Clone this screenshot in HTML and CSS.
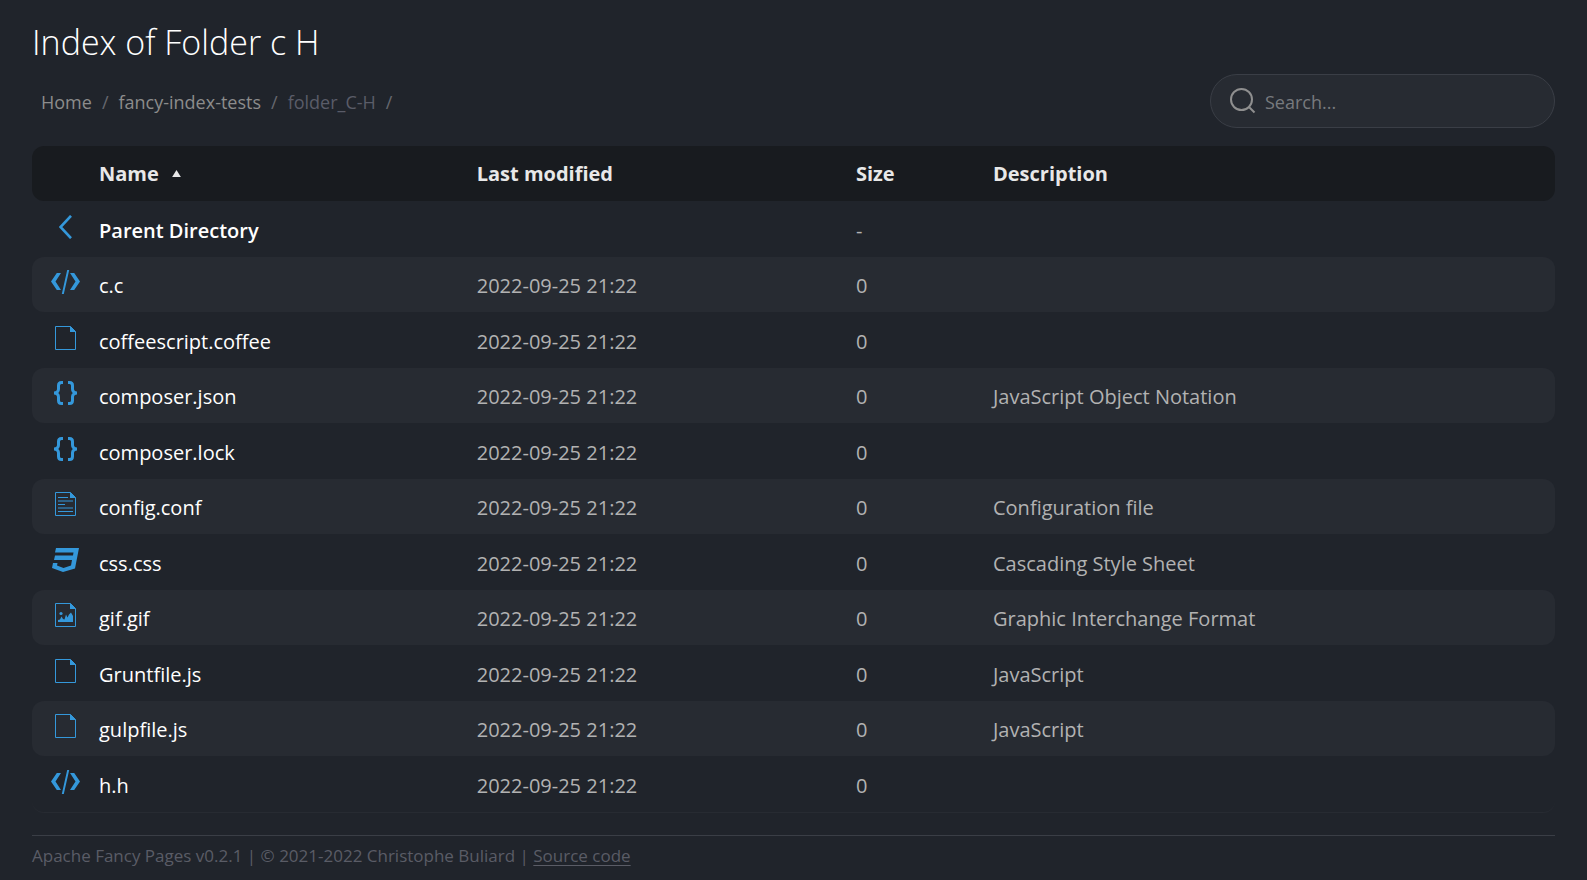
FILE: index.html
```html
<!DOCTYPE html>
<html lang="en">
<head>
<meta charset="utf-8">
<title>Index of Folder c H</title>
<link rel="stylesheet" href="styles.css">
</head>
<body>
<svg class="sprite" aria-hidden="true">
  <symbol id="i-back" viewBox="0 0 13 24"><path d="M12 .8 1.500 12 12 23.200" fill="none" stroke="currentColor" stroke-width="2.600"/></symbol>
  <symbol id="i-code" viewBox="0 0 29 24"><path d="M5.800 3H10L4.500 11.500 10 20H5.800L0 11.500ZM23.200 3H19L24.500 11.500 19 20H23.200L29 11.500ZM16.200 0H18.200L12.800 24H10.800Z" fill="currentColor"/></symbol>
  <symbol id="i-file" viewBox="0 0 21 24"><path d="M.5.500H15.500L20.500 5.500V23.500H.5Z" fill="none" stroke="currentColor"/><path d="M15 0 21 6H15Z" fill="currentColor"/></symbol>
  <symbol id="i-text" viewBox="0 0 21 24"><path d="M.5.500H15.500L20.500 5.500V23.500H.5ZM3 5.500H13M3 9H18M3 12.500H10M3 16H18M3 19.500H18" fill="none" stroke="currentColor"/><path d="M15 0 21 6H15Z" fill="currentColor"/></symbol>
  <symbol id="i-image" viewBox="0 0 21 24"><path d="M.5.500H15.500L20.500 5.500V23.500H.5Z" fill="none" stroke="currentColor"/><path d="M15 0 21 6H15ZM3 19V17L5 16.500 6.500 13.500 8 16 9.500 16.500 11 11.500 12.500 14.500 14 11.500 16 9.500 18 13V19Z" fill="currentColor"/><circle cx="6" cy="10.500" r="1.600" fill="currentColor"/></symbol>
  <symbol id="i-json" viewBox="0 0 23 24"><path d="M9 1.500H7.500Q4.500 1.500 4.500 4.500V8Q4.500 11.500 0 12 4.500 12.500 4.500 16V19.500Q4.500 22.500 7.500 22.500H9M14 1.500H15.500Q18.500 1.500 18.500 4.500V8Q18.500 11.500 23 12 18.500 12.500 18.500 16V19.500Q18.500 22.500 15.500 22.500H14" fill="none" stroke="currentColor" stroke-width="3"/></symbol>
  <symbol id="i-css" viewBox="0 0 27 24"><path d="M4 0H27L23 20.500 11 24 0 20 1 15H5.500L5 17.500 11.500 20 19 17.500 20 12H2L3 7.500H21L21.500 4.500H3Z" fill="currentColor"/></symbol>
</svg>

<header>
  <h1 class="title">Index of Folder c H</h1>
  <div class="toolbar">
    <nav aria-label="Breadcrumb">
      <ol class="crumbs">
        <li><a href="#">Home</a></li>
        <li><a href="#">fancy-index-tests</a></li>
        <li aria-current="page">folder_C-H</li>
      </ol>
    </nav>
    <label class="search">
      <svg class="search-icon" viewBox="0 0 26 26" aria-hidden="true"><circle cx="11.500" cy="11.500" r="10.500"/><path d="M18.500 18.500 24.500 24.500"/></svg>
      <input type="search" placeholder="Search..." aria-label="Search">
    </label>
  </div>
</header>

<main>
<table class="listing">
  <colgroup><col class="col-icon"><col class="col-name"><col class="col-date"><col class="col-size"><col></colgroup>
  <thead>
    <tr><th></th><th aria-sort="ascending"><a href="#">Name<svg class="sort" viewBox="0 0 10 8" aria-hidden="true"><path d="M0 8 5 0 10 8Z" fill="currentColor"/></svg></a></th><th><a href="#">Last modified</a></th><th><a href="#">Size</a></th><th><a href="#">Description</a></th></tr>
  </thead>
  <tbody>
    <tr class="parent"><td class="icon"><svg width="13" height="24"><use href="#i-back"/></svg></td><td><a href="#">Parent Directory</a></td><td></td><td>-</td><td></td></tr>
    <tr><td class="icon"><svg width="29" height="24"><use href="#i-code"/></svg></td><td><a href="#">c.c</a></td><td>2022-09-25 21:22</td><td>0</td><td></td></tr>
    <tr><td class="icon"><svg width="21" height="24"><use href="#i-file"/></svg></td><td><a href="#">coffeescript.coffee</a></td><td>2022-09-25 21:22</td><td>0</td><td></td></tr>
    <tr><td class="icon"><svg width="23" height="24"><use href="#i-json"/></svg></td><td><a href="#">composer.json</a></td><td>2022-09-25 21:22</td><td>0</td><td>JavaScript Object Notation</td></tr>
    <tr><td class="icon"><svg width="23" height="24"><use href="#i-json"/></svg></td><td><a href="#">composer.lock</a></td><td>2022-09-25 21:22</td><td>0</td><td></td></tr>
    <tr><td class="icon"><svg width="21" height="24"><use href="#i-text"/></svg></td><td><a href="#">config.conf</a></td><td>2022-09-25 21:22</td><td>0</td><td>Configuration file</td></tr>
    <tr><td class="icon"><svg width="27" height="24"><use href="#i-css"/></svg></td><td><a href="#">css.css</a></td><td>2022-09-25 21:22</td><td>0</td><td>Cascading Style Sheet</td></tr>
    <tr><td class="icon"><svg width="21" height="24"><use href="#i-image"/></svg></td><td><a href="#">gif.gif</a></td><td>2022-09-25 21:22</td><td>0</td><td>Graphic Interchange Format</td></tr>
    <tr><td class="icon"><svg width="21" height="24"><use href="#i-file"/></svg></td><td><a href="#">Gruntfile.js</a></td><td>2022-09-25 21:22</td><td>0</td><td>JavaScript</td></tr>
    <tr><td class="icon"><svg width="21" height="24"><use href="#i-file"/></svg></td><td><a href="#">gulpfile.js</a></td><td>2022-09-25 21:22</td><td>0</td><td>JavaScript</td></tr>
    <tr><td class="icon"><svg width="29" height="24"><use href="#i-code"/></svg></td><td><a href="#">h.h</a></td><td>2022-09-25 21:22</td><td>0</td><td></td></tr>
  </tbody>
</table>
</main>

<footer class="footer">Apache Fancy Pages v0.2.1 | © 2021-2022 Christophe Buliard | <a href="#">Source code</a></footer>
</body>
</html>
```
FILE: styles.css
```css
* { box-sizing: border-box; }

body {
  margin: 0;
  padding: 16px 32px 0;
  background: #20242b;
  color: #b2b2b2;
  font: 20px/28px "Segoe UI", "Open Sans", "Noto Sans", sans-serif;
}

a { color: inherit; text-decoration: none; }

.sprite { display: none; }

.title {
  margin: 0;
  color: #fff;
  font-size: 34px;
  font-weight: 300;
  line-height: 52px;
}

.toolbar {
  display: flex;
  justify-content: space-between;
  align-items: center;
  margin: 6px 0 18px;
}

.crumbs {
  display: flex;
  gap: 10px;
  margin: 0;
  padding: 2px 0 0 9px;
  list-style: none;
  font-size: 18px;
  color: #5a5c68;
}

.crumbs li::after { content: "/"; margin-left: 10px; color: #66686f; }
.crumbs a { color: #8c8c8c; }

.search {
  display: flex;
  align-items: center;
  gap: 9px;
  width: 345px;
  height: 54px;
  padding: 0 19px;
  border: 1px solid #3a3e46;
  border-radius: 27px;
  background: #272b32;
}

.search-icon {
  flex: none;
  width: 26px;
  height: 26px;
  fill: none;
  stroke: #8f8f8f;
  stroke-width: 2;
}

.search input {
  flex: 1;
  min-width: 0;
  padding: 2px 0 0;
  border: 0;
  outline: 0;
  background: none;
  color: #ddd;
  font: inherit;
  font-size: 18px;
}

.search input::placeholder { color: #777a7e; opacity: 1; }

.listing {
  width: 100%;
  table-layout: fixed;
  border-collapse: separate;
  border-spacing: 0;
}

.col-icon { width: 67px; }
.col-name { width: 24.8%; }
.col-date { width: 24.9%; }
.col-size { width: 9%; }

.listing th, .listing td { height: 55px; padding: 0; text-align: left; }
.listing th { background: #181b1f; color: #e8e8e8; font-weight: 700; }

.listing tbody tr:nth-child(odd) td { height: 56px; padding-top: 3px; }
.listing tbody tr:nth-child(even) td { padding-top: 2px; background: #272b32; }
.listing tbody tr:last-child td { height: 57px; border-bottom: 1px solid #272b32; }

.listing tr > :first-child { border-radius: 12px 0 0 12px; }
.listing tr > :last-child { border-radius: 0 12px 12px 0; }

.listing td a { color: #fff; }
.parent a { font-weight: 600; }

.listing .icon { vertical-align: top; color: #3498db; }
.listing tbody tr:nth-child(even) .icon { padding-top: 13px; }
.listing tbody tr:nth-child(odd) .icon { padding-top: 14px; }
.icon svg { display: block; margin: 0 auto; }

.sort { width: 9px; height: 7px; margin-left: 13px; vertical-align: 4px; }

.footer {
  margin-top: 22px;
  padding-top: 6px;
  border-top: 1px solid #3a3e46;
  color: #5a5c66;
  font-size: 17px;
}

.footer a { text-decoration: underline; text-underline-offset: 3px; text-decoration-thickness: 1px; }
```
